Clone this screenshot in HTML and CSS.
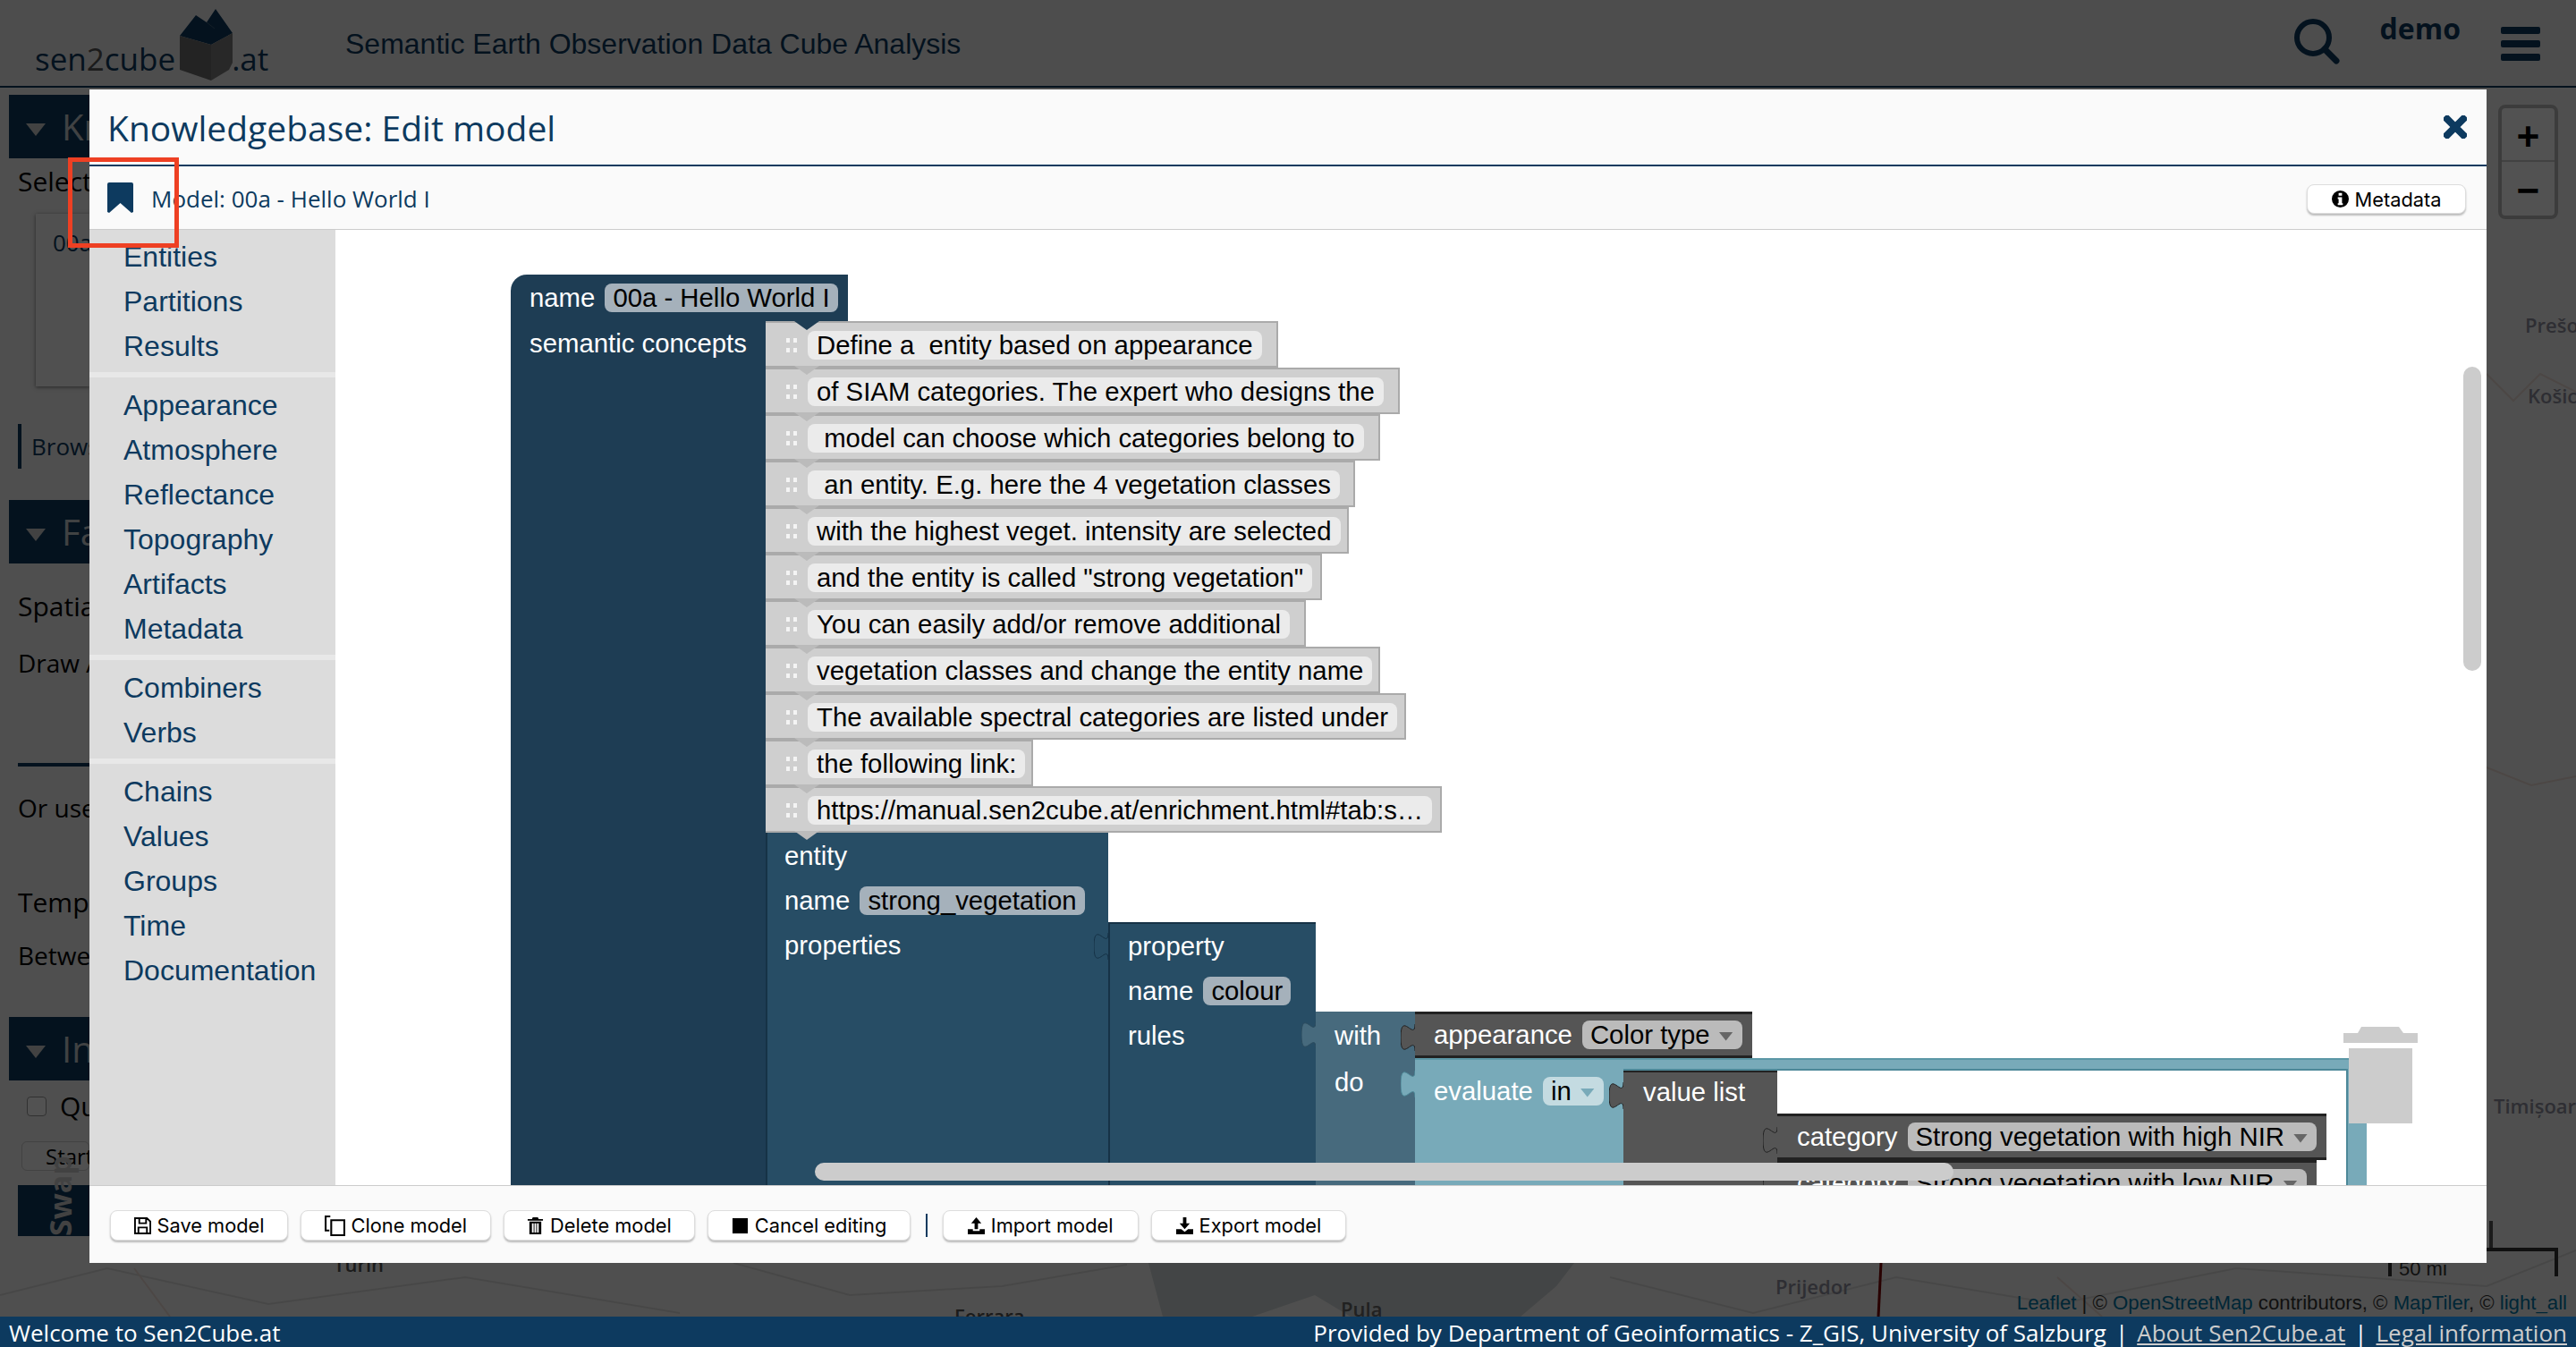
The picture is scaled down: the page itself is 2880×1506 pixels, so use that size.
FILE: index.html
```html
<!DOCTYPE html>
<html lang="en">
<head>
    <meta charset="UTF-8">
    <meta name="viewport" content="width=device-width, initial-scale=1.0">
    <title>Sen2Cube.at</title>
    <link rel="stylesheet" href="styles.css">
</head>
<body>
    <svg class="defs">
        <symbol id="nub" viewBox="0 0 8 15">
            <path d="M8 0c0 10-8-8-8 7.5s8-2.5 8 7.5"/>
        </symbol>
    </svg>

    <div class="page">
        <header class="topbar">
            <div class="logo">
                <span>sen<span class="logo-two">2</span>cube</span>
                <svg class="logo-cube" viewBox="204 10 60 80">
                    <path fill="#0d3a5f" d="M204 40 222 17 234 25 244 10 263 37 239 50z"/>
                    <path fill="none" stroke="#3d5d78" stroke-width="1" d="M234 25 243 32"/>
                    <path fill="#6e6e6e" d="M204 40 239 50V90L204 78z"/>
                    <path fill="#7d7d7d" d="M239 50 263 37V70L259 78 239 90z"/>
                </svg>
                <span>.at</span>
            </div>
            <div class="topbar-title">Semantic Earth Observation Data Cube Analysis</div>
            <div class="topbar-actions">
                <svg class="search-icon" viewBox="0 0 51 51">
                    <circle cx="21" cy="21" r="18" fill="none" stroke="currentColor" stroke-width="6"/>
                    <path d="M34 34 47 47" stroke="currentColor" stroke-width="7" stroke-linecap="round"/>
                </svg>
                <span class="user-name">demo</span>
                <div class="burger"><i></i><i></i><i></i></div>
            </div>
        </header>

        <main class="map">
            <svg class="map-lines" viewBox="0 0 2880 1374">
                <path fill="#cfd6d8" d="M1284 1314 1500 1314 1760 1314 1740 1340 1700 1374 1510 1374 1470 1350 1400 1374 1300 1374z"/>
                <path fill="none" stroke="#dedede" stroke-width="2" d="M0 1350 120 1320 300 1360 520 1330 760 1370M820 1314 950 1350 1120 1340 1260 1316M1800 1330 1960 1370 2120 1330 2300 1360 2500 1320 2780 1340 2880 1300"/>
                <path fill="none" stroke="#ecdcd6" stroke-width="2" d="M2780 320 2810 350 2840 320 2880 340M2780 760 2830 780 2880 770M150 1320 190 1374M2300 1330 2350 1374"/>
                <path fill="none" stroke="#7d0000" stroke-width="3" d="M2103 1314 2100 1374"/>
            </svg>
            <span class="place place-turin">Turin</span>
            <span class="place place-ferrara">Ferrara</span>
            <span class="place place-pula">Pula</span>
            <span class="place place-prijedor">Prijedor</span>
            <span class="place place-presov">Prešov</span>
            <span class="place place-kosice">Košice</span>
            <span class="place place-timisoara">Timișoara</span>

            <aside class="side">
                <section class="panel panel-kb">
                    <h2 class="panel-head"><i class="caret"></i>Knowledgebase</h2>
                    <div class="panel-text panel-select">Selected model</div>
                    <div class="model-card">00a - Hello</div>
                    <div class="browse">Browse</div>
                </section>
                <section class="panel panel-facets">
                    <h2 class="panel-head"><i class="caret"></i>Factbase</h2>
                    <div class="panel-text facet-spatial">Spatial</div>
                    <div class="panel-small facet-draw">Draw Area</div>
                    <div class="facet-rule"></div>
                    <div class="panel-small facet-use">Or use</div>
                    <div class="panel-text facet-temp">Temporal</div>
                    <div class="panel-small facet-between">Between</div>
                </section>
                <section class="panel panel-info">
                    <h2 class="panel-head"><i class="caret"></i>Inference</h2>
                    <div class="query"><i class="checkbox"></i>Query</div>
                    <div class="start-button">Start</div>
                </section>
                <div class="swap"><span>Swap</span></div>
            </aside>

            <div class="zoom-box">
                <div class="zoom-in">+</div>
                <div class="zoom-out">−</div>
            </div>
            <div class="scale"><div class="scale-top"></div><div class="scale-bottom">50 mi</div></div>
            <div class="attribution"><a>Leaflet</a> | © <a>OpenStreetMap</a> contributors, © <a>MapTiler</a>, © <a>light_all</a></div>
        </main>

        <div class="overlay"></div>

        <footer class="statusbar">
            <span>Welcome to Sen2Cube.at</span>
            <span>Provided by Department of Geoinformatics - Z_GIS, University of Salzburg<span class="sep">|</span><a>About Sen2Cube.at</a><span class="sep">|</span><a>Legal information</a></span>
        </footer>

        <div class="modal">
            <div class="modal-head">
                <h1>Knowledgebase: Edit model</h1>
                <svg class="close-icon" viewBox="0 0 26 26">
                    <path d="M4 4 22 22M22 4 4 22" stroke="currentColor" stroke-width="8" stroke-linecap="square"/>
                </svg>
            </div>
            <div class="modal-sub">
                <svg class="bookmark" viewBox="0 0 29 34">
                    <path fill="currentColor" d="M2 0H27A2 2 0 0 1 29 2V33L27 34 14.500 23 2 34 0 33V2A2 2 0 0 1 2 0z"/>
                </svg>
                <span class="model-title">Model: 00a - Hello World I</span>
                <button class="btn btn-meta">
                    <svg class="btn-icon" viewBox="0 0 20 20">
                        <path fill="currentColor" fill-rule="evenodd" d="M10 0a10 10 0 1 0 0 20a10 10 0 1 0 0-20zM8 3h4v3H8zM7 8h5v7h1v2H7v-2h1v-5H7z"/>
                    </svg>
                    Metadata
                </button>
            </div>

            <div class="modal-body">
                <nav class="toolbox">
                    <div class="toolbox-group">
                        <div class="toolbox-item">Entities</div>
                        <div class="toolbox-item">Partitions</div>
                        <div class="toolbox-item">Results</div>
                    </div>
                    <div class="toolbox-group">
                        <div class="toolbox-item">Appearance</div>
                        <div class="toolbox-item">Atmosphere</div>
                        <div class="toolbox-item">Reflectance</div>
                        <div class="toolbox-item">Topography</div>
                        <div class="toolbox-item">Artifacts</div>
                        <div class="toolbox-item">Metadata</div>
                    </div>
                    <div class="toolbox-group">
                        <div class="toolbox-item">Combiners</div>
                        <div class="toolbox-item">Verbs</div>
                    </div>
                    <div class="toolbox-group">
                        <div class="toolbox-item">Chains</div>
                        <div class="toolbox-item">Values</div>
                        <div class="toolbox-item">Groups</div>
                        <div class="toolbox-item">Time</div>
                        <div class="toolbox-item">Documentation</div>
                    </div>
                </nav>

                <div class="workspace">
                    <div class="model">
                        <div class="model-name">
                            <span>name</span><span class="field field-blue">00a - Hello World I</span>
                        </div>
                        <div class="model-body">
                            <div class="model-label">semantic concepts</div>
                            <div class="model-stack">
                                <div class="note" style="width: 573px"><i class="handle"></i><span class="field field-light">Define a  entity based on appearance</span></div>
                                <div class="note" style="width: 709px"><i class="handle"></i><span class="field field-light">of SIAM categories. The expert who designs the</span></div>
                                <div class="note" style="width: 687px"><i class="handle"></i><span class="field field-light"> model can choose which categories belong to</span></div>
                                <div class="note" style="width: 659px"><i class="handle"></i><span class="field field-light"> an entity. E.g. here the 4 vegetation classes</span></div>
                                <div class="note" style="width: 652px"><i class="handle"></i><span class="field field-light">with the highest veget. intensity are selected</span></div>
                                <div class="note" style="width: 622px"><i class="handle"></i><span class="field field-light">and the entity is called "strong vegetation"</span></div>
                                <div class="note" style="width: 604px"><i class="handle"></i><span class="field field-light">You can easily add/or remove additional</span></div>
                                <div class="note" style="width: 687px"><i class="handle"></i><span class="field field-light">vegetation classes and change the entity name</span></div>
                                <div class="note" style="width: 716px"><i class="handle"></i><span class="field field-light">The available spectral categories are listed under</span></div>
                                <div class="note" style="width: 299px"><i class="handle"></i><span class="field field-light">the following link:</span></div>
                                <div class="note" style="width: 756px"><i class="handle"></i><span class="field field-light">https://manual.sen2cube.at/enrichment.html#tab:s…</span></div>

                                <div class="entity">
                                    <div class="entity-col">
                                        <div class="line">entity</div>
                                        <div class="line">name<span class="field field-blue">strong_vegetation</span></div>
                                        <div class="line">properties</div>
                                    </div>
                                    <div class="property">
                                        <svg class="nub nub-property"><use href="#nub"/></svg>
                                        <div class="property-col">
                                            <div class="line">property</div>
                                            <div class="line">name<span class="field field-blue">colour</span></div>
                                            <div class="line">rules</div>
                                        </div>
                                        <div class="rule">
                                            <svg class="nub nub-rule"><use href="#nub"/></svg>
                                            <div class="rule-col">
                                                <div class="line">with</div>
                                                <div class="line">do</div>
                                            </div>
                                            <div class="rule-body">
                                                <div class="appearance">
                                                    <svg class="nub nub-grey"><use href="#nub"/></svg>
                                                    <span>appearance</span><span class="field field-grey">Color type<i class="arrow"></i></span>
                                                </div>
                                                <div class="evaluate">
                                                    <svg class="nub nub-teal"><use href="#nub"/></svg>
                                                    <div class="evaluate-col">
                                                        <span>evaluate</span><span class="field field-teal">in<i class="arrow arrow-teal"></i></span>
                                                    </div>
                                                    <div class="evaluate-slot">
                                                        <div class="value-list">
                                                            <svg class="nub nub-list"><use href="#nub"/></svg>
                                                            <div class="line">value list</div>
                                                        </div>
                                                        <div class="categories">
                                                            <div class="category">
                                                                <svg class="nub nub-cat"><use href="#nub"/></svg>
                                                                <span>category</span><span class="field field-grey">Strong vegetation with high NIR<i class="arrow"></i></span>
                                                            </div>
                                                            <div class="category">
                                                                <svg class="nub nub-cat"><use href="#nub"/></svg>
                                                                <span>category</span><span class="field field-grey">Strong vegetation with low NIR<i class="arrow"></i></span>
                                                            </div>
                                                        </div>
                                                    </div>
                                                </div>
                                            </div>
                                        </div>
                                    </div>
                                </div>
                            </div>
                        </div>
                    </div>

                    <svg class="trash" viewBox="0 0 83 108">
                        <path fill="#ccc" d="M16 7 20 0H62L67 7H83V18H0V7zM6 24H77V108H6z"/>
                    </svg>
                    <div class="scroll-x"></div>
                    <div class="scroll-y"></div>
                </div>
            </div>

            <div class="modal-foot">
                <button class="btn">
                    <svg class="btn-icon" viewBox="0 0 20 20"><path fill="none" stroke="currentColor" stroke-width="2" d="M2 1H15L19 5V19H1V1zM6 1V7H14V1M5 19V12H15V19"/></svg>
                    Save model
                </button>
                <button class="btn">
                    <svg class="btn-icon btn-icon-wide" viewBox="0 0 22 22"><path fill="none" stroke="currentColor" stroke-width="2" d="M6 1H1V16H5M7 5H21V21H7z"/></svg>
                    Clone model
                </button>
                <button class="btn">
                    <svg class="btn-icon" viewBox="0 0 20 20"><path fill="currentColor" fill-rule="evenodd" d="M7 0H13L14 2H19V4H1V2H6zM3 5H17V20H3zM6 7V18H8V7zM9 7V18H11V7zM12 7V18H14V7z"/></svg>
                    Delete model
                </button>
                <button class="btn">
                    <svg class="btn-icon" viewBox="0 0 20 20"><path fill="currentColor" d="M1 1H19V19H1z"/></svg>
                    Cancel editing
                </button>
                <i class="foot-sep"></i>
                <button class="btn btn-port">
                    <svg class="btn-icon" viewBox="0 0 20 20"><path fill="currentColor" d="M10 0 16 7H12V14H8V7H4zM0 14H6V16H14V14H20V20H0z"/></svg>
                    Import model
                </button>
                <button class="btn btn-port">
                    <svg class="btn-icon" viewBox="0 0 20 20"><path fill="currentColor" d="M8 0H12V7H16L10 14 4 7H8zM0 14H6L10 17 14 14H20V20H0z"/></svg>
                    Export model
                </button>
            </div>
        </div>

        <div class="callout"></div>
    </div>
</body>
</html>
```
FILE: styles.css
```css
:root {
    --navy: #0d3a5f;
    --model-color: #1e3d54;
    --entity-color: #274d65;
    --rule-color: #476a7d;
    --grey-block: #555;
    --teal-block: #78aab9;
    --teal-edge: #4d8898;
}

* {
    box-sizing: border-box;
}

body {
    margin: 0;
    font-family: "Liberation Sans", Arial, sans-serif;
}

.defs {
    display: none;
}

.page {
    position: relative;
    width: 2880px;
    height: 1506px;
    overflow: hidden;
    display: flex;
    flex-direction: column;
    background-color: #fff;
}

/* page behind the dialog */
.topbar {
    height: 98px;
    flex: none;
    display: flex;
    background-color: #f0f0f0;
    border-bottom: 2px solid var(--navy);
    color: var(--navy);
}

.logo {
    margin-left: 39px;
    width: 272px;
    height: 80px;
    margin-top: 10px;
    display: flex;
    align-items: flex-end;
    font-family: "Open Sans", sans-serif;
    font-size: 35px;
    line-height: 48px;
}

.logo-two {
    color: #555;
}

.logo-cube {
    width: 60px;
    height: 80px;
    margin: 0 -2px 0 5px;
    flex: none;
}

.topbar-title {
    margin-left: 75px;
    margin-top: 27px;
    font-size: 32px;
    line-height: 44px;
}

.topbar-actions {
    margin-left: auto;
    margin-right: 40px;
    display: flex;
    align-items: flex-start;
}

.search-icon {
    width: 51px;
    height: 51px;
    margin-top: 21px;
}

.user-name {
    margin-left: 45px;
    margin-top: 8px;
    font-family: "Open Sans", sans-serif;
    font-weight: 700;
    font-size: 32px;
    line-height: 48px;
}

.burger {
    margin-left: 45px;
    margin-top: 30px;
    display: flex;
    flex-direction: column;
    gap: 7px;
}

.burger i {
    display: block;
    width: 44px;
    height: 8px;
    border-radius: 2px;
    background-color: currentColor;
}

.map {
    position: relative;
    flex: 1;
    background-color: #f6f6f4;
    overflow: hidden;
}

.map-lines {
    position: absolute;
    left: 0;
    top: 0;
    width: 2880px;
    height: 1374px;
}

.place {
    position: absolute;
    font-family: "Open Sans", sans-serif;
    font-weight: 600;
    font-size: 22px;
    color: #8e8e9e;
    white-space: nowrap;
}

.place-turin { left: 373px; top: 1300px; color: #555; }
.place-ferrara { left: 1067px; top: 1358px; color: #555; }
.place-pula { left: 1499px; top: 1350px; color: #666; }
.place-prijedor { left: 1985px; top: 1325px; color: #8e8e9e; }
.place-presov { left: 2823px; top: 250px; }
.place-kosice { left: 2826px; top: 329px; }
.place-timisoara { left: 2788px; top: 1123px; }

.side {
    position: absolute;
    left: 10px;
    top: 8px;
    width: 90px;
    height: 1304px;
    overflow: hidden;
    display: flex;
    flex-direction: column;
    gap: 10px;
    font-family: "Open Sans", sans-serif;
    white-space: nowrap;
    color: #000;
}

.panel {
    flex: none;
    background-color: #f4f4f4;
    overflow: hidden;
}

.panel-kb { height: 443px; }
.panel-facets { height: 567px; }
.panel-info { height: 188px; margin-top: 1px; }

.panel-head {
    margin: 0;
    height: 71px;
    padding-left: 59px;
    position: relative;
    background-color: var(--navy);
    color: #c8ccd0;
    font-family: "Open Sans", sans-serif;
    font-weight: 400;
    font-size: 40px;
    line-height: 71px;
}

.caret {
    position: absolute;
    left: 19px;
    top: 32px;
    width: 22px;
    height: 14px;
    background-color: #ccc;
    clip-path: polygon(0 0, 100% 0, 50% 100%);
}

.panel-text {
    padding-left: 10px;
    font-size: 30px;
    line-height: 44px;
}

.panel-small {
    padding-left: 10px;
    font-size: 28px;
    line-height: 40px;
}

.panel-select { margin-top: 4px; }

.model-card {
    margin: 14px 0 0 30px;
    height: 193px;
    padding: 14px 0 0 19px;
    font-size: 26px;
    color: var(--navy);
    background-color: #f8f8f8;
    box-shadow: 0 1px 4px rgba(0, 0, 0, 0.5);
}

.browse {
    margin: 42px 0 0 10px;
    height: 50px;
    padding-left: 11px;
    border-left: 4px solid var(--navy);
    font-size: 26px;
    line-height: 50px;
    color: var(--navy);
}

.facet-spatial { margin-top: 26px; }
.facet-draw { margin-top: 21px; }

.facet-rule {
    margin: 92px 0 0 10px;
    height: 4px;
    background-color: var(--navy);
}

.facet-use { margin-top: 26px; }
.facet-temp { margin-top: 64px; }
.facet-between { margin-top: 17px; }

.query {
    margin: 18px 0 0 20px;
    display: flex;
    align-items: center;
    gap: 15px;
    font-size: 30px;
    line-height: 22px;
}

.checkbox {
    flex: none;
    width: 22px;
    height: 22px;
    background-color: #fff;
    border: 1px solid #999;
    border-radius: 4px;
}

.start-button {
    margin: 28px 0 0 14px;
    height: 33px;
    padding-left: 26px;
    background-color: #f8f8f8;
    border: 1px solid #ccc;
    border-radius: 6px;
    font-size: 24px;
    line-height: 31px;
}

.swap {
    flex: none;
    margin: -10px 0 0 10px;
    height: 57px;
    background-color: var(--navy);
    position: relative;
}

.swap span {
    position: absolute;
    left: 24px;
    top: 0;
    color: #ccc;
    font-weight: 700;
    font-size: 34px;
    transform-origin: left top;
    transform: rotate(-90deg) translateX(-57px);
}

.zoom-box {
    position: absolute;
    left: 2793px;
    top: 19px;
    width: 67px;
    height: 128px;
    border: 4px solid #bbb;
    border-radius: 8px;
    background-color: #fff;
    font-family: "Liberation Mono", monospace;
    font-weight: 700;
    font-size: 44px;
    color: #000;
    text-align: center;
}

.zoom-in {
    height: 60px;
    line-height: 70px;
    border-bottom: 2px solid #ccc;
}

.zoom-out {
    height: 60px;
    line-height: 70px;
}

.scale {
    position: absolute;
    left: 2670px;
    top: 1267px;
    width: 190px;
    color: #333;
    font-size: 22px;
}

.scale-top {
    width: 117px;
    height: 32px;
    border-right: 4px solid #555;
    margin-bottom: -2px;
}

.scale-bottom {
    height: 32px;
    padding-left: 8px;
    border: 4px solid #333;
    border-bottom: 0;
    line-height: 40px;
}

.attribution {
    position: absolute;
    right: 10px;
    bottom: 2px;
    font-size: 22.200px;
    line-height: 26px;
    color: #333;
    white-space: nowrap;
}

.attribution a {
    color: #0078a8;
}

.overlay {
    position: absolute;
    left: 0;
    top: 0;
    right: 0;
    bottom: 34px;
    background-color: rgba(0, 0, 0, 0.68);
}

.statusbar {
    position: relative;
    height: 34px;
    flex: none;
    padding: 0 10px;
    display: flex;
    justify-content: space-between;
    background-color: var(--navy);
    color: #fff;
    font-family: "Open Sans", sans-serif;
    font-size: 26px;
    line-height: 36px;
    white-space: nowrap;
}

.statusbar a {
    color: #ccc;
    text-decoration: underline;
}

.sep {
    margin: 0 10px;
}

/* dialog */
.modal {
    position: absolute;
    left: 100px;
    top: 100px;
    width: 2680px;
    height: 1312px;
    display: flex;
    flex-direction: column;
    background-color: #fafafa;
    color: var(--navy);
}

.modal-head {
    height: 86px;
    flex: none;
    padding: 0 22px 0 20px;
    display: flex;
    justify-content: space-between;
    align-items: center;
    border-bottom: 2px solid var(--navy);
}

.modal-head h1 {
    margin: 0;
    font-family: "Open Sans", sans-serif;
    font-weight: 400;
    font-size: 39px;
}

.close-icon {
    width: 26px;
    height: 26px;
}

.modal-sub {
    height: 71px;
    flex: none;
    padding: 0 23px 0 20px;
    display: flex;
    align-items: center;
    border-bottom: 1px solid #ccc;
}

.bookmark {
    width: 29px;
    height: 34px;
    flex: none;
}

.model-title {
    margin-left: 20px;
    margin-top: 1px;
    font-family: "Open Sans", sans-serif;
    font-size: 26px;
}

.btn {
    height: 34px;
    padding: 0 25.500px;
    display: flex;
    align-items: center;
    gap: 7px;
    background-color: #fff;
    border: 1px solid #ddd;
    border-radius: 8px;
    box-shadow: 0 2px 2px rgba(0, 0, 0, 0.25);
    font-family: Inter, sans-serif;
    font-size: 21.800px;
    color: #000;
    white-space: nowrap;
}

.btn-meta {
    margin-left: auto;
    margin-top: 3px;
    height: 33px;
    width: 178px;
    justify-content: center;
}

.btn-port {
    padding: 0 27px;
}

.btn-icon {
    width: 19px;
    height: 19px;
    flex: none;
}

.btn-icon-wide {
    width: 23px;
    height: 23px;
}

.modal-body {
    flex: 1;
    min-height: 0;
    display: flex;
}

.toolbox {
    width: 275px;
    flex: none;
    padding-top: 5px;
    background-color: #dcdcdc;
    font-size: 32px;
}

.toolbox-group {
    padding: 6px 0 4px 38px;
}

.toolbox-group:first-child {
    padding-top: 0;
}

.toolbox-group + .toolbox-group {
    border-top: 6px solid #e8e8e8;
}

.toolbox-item {
    line-height: 50px;
}

.workspace {
    position: relative;
    flex: 1;
    overflow: hidden;
    background-color: #fff;
}

.model {
    position: absolute;
    left: 196px;
    top: 50px;
    width: 2200px;
    height: 1300px;
    display: flex;
    flex-direction: column;
    font-size: 29.330px;
    color: #fff;
    white-space: nowrap;
}

.model-name {
    width: 377px;
    height: 52px;
    flex: none;
    padding-left: 21px;
    display: flex;
    align-items: center;
    gap: 11px;
    background-color: var(--model-color);
    border-top-left-radius: 18px;
}

.model-body {
    flex: 1;
    display: flex;
}

.model-label {
    width: 285px;
    flex: none;
    padding-left: 21px;
    line-height: 50px;
    background-color: var(--model-color);
}

.model-stack {
    flex: 1;
    display: flex;
    flex-direction: column;
}

.field {
    height: 32px;
    padding: 0 9px;
    display: inline-flex;
    align-items: center;
    border-radius: 8px;
    color: #000;
}

.field-blue { background-color: #a5b1bb; }
.field-grey { background-color: #bbb; padding-right: 10px; }
.field-teal { background-color: #c4dbe1; padding-right: 10px; }

.field-light {
    padding: 0 10px;
    background-color: #ebebeb;
    white-space: pre;
}

.arrow {
    width: 16px;
    height: 10px;
    margin-left: 10px;
    margin-top: 3px;
    background-color: #666;
    clip-path: polygon(0 0, 100% 0, 50% 100%);
}

.arrow-teal {
    background-color: var(--teal-block);
}

.note {
    position: relative;
    height: 52px;
    flex: none;
    padding: 8px 10px 0 47px;
    background-color: #cfcfcf;
    border: solid #aaa;
    border-width: 2px 2px 2px 0;
}

.note:first-child::before {
    content: "";
    position: absolute;
    left: 32px;
    top: -2px;
    width: 28px;
    height: 10px;
    background-color: var(--model-color);
    clip-path: polygon(0 0, 100% 0, 50% 100%);
}

.note::after {
    content: "";
    position: absolute;
    z-index: 2;
    left: 32px;
    bottom: -10px;
    width: 28px;
    height: 10px;
    background-color: #bbb;
    clip-path: polygon(0 0, 100% 0, 50% 100%);
}

.handle {
    position: absolute;
    left: 23px;
    top: 17px;
    width: 12px;
    height: 16px;
    background:
        linear-gradient(#f4f4f4, #f4f4f4) left top / 4px 5px no-repeat,
        linear-gradient(#f4f4f4, #f4f4f4) right top / 4px 5px no-repeat,
        linear-gradient(#f4f4f4, #f4f4f4) left bottom / 4px 5px no-repeat,
        linear-gradient(#f4f4f4, #f4f4f4) right bottom / 4px 5px no-repeat;
}

.entity {
    flex: 1;
    display: flex;
}

.entity-col {
    width: 383px;
    flex: none;
    padding: 1px 0 0 19px;
    background-color: var(--entity-color);
    border-left: 2px solid #163246;
}

.line {
    height: 50px;
    display: flex;
    align-items: center;
    gap: 11px;
}

.property {
    position: relative;
    margin-top: 100px;
    flex: 1;
    display: flex;
    align-items: stretch;
}

.nub {
    position: absolute;
    left: -16px;
    width: 16px;
    height: 30px;
    overflow: visible;
    stroke-width: 0.5;
}

.nub-property { top: 12px; fill: var(--entity-color); stroke: #163246; }
.nub-rule { top: 11px; fill: var(--rule-color); stroke: #2d4c5e; }
.nub-grey { top: 11px; fill: var(--grey-block); stroke: #222; }
.nub-teal { top: 12px; fill: var(--teal-block); stroke: var(--teal-edge); }
.nub-list { top: 11px; fill: var(--grey-block); stroke: #222; }
.nub-cat { top: 12px; fill: var(--grey-block); stroke: #222; }

.property-col {
    width: 232px;
    flex: none;
    padding-left: 20px;
    background-color: var(--entity-color);
    border-top: 2px solid #163246;
    border-left: 2px solid #163246;
}

.rule {
    position: relative;
    margin-top: 100px;
    flex: 1;
    display: flex;
}

.rule-col {
    width: 111px;
    flex: none;
    padding: 1px 0 0 21px;
    background-color: var(--rule-color);
}

.rule-col .line {
    height: 52px;
}

.rule-body {
    flex: 1;
    display: flex;
    flex-direction: column;
}

.appearance {
    position: relative;
    width: fit-content;
    height: 52px;
    flex: none;
    padding: 0 11px 0 21px;
    display: flex;
    align-items: center;
    gap: 11px;
    background-color: var(--grey-block);
    border-top: 3px solid #222;
    border-bottom: 3px solid #222;
}

.evaluate {
    position: relative;
    width: 1064px;
    flex: 1;
    padding: 10px 21px 0 0;
    display: flex;
    background-color: var(--teal-block);
    border-top: 2px solid #5b97a6;
}

.evaluate-col {
    width: 233px;
    flex: none;
    height: 50px;
    padding-left: 21px;
    display: flex;
    align-items: center;
    gap: 11px;
}

.evaluate-slot {
    flex: 1;
    display: flex;
    background-color: #fff;
    border-top: 2px solid var(--teal-edge);
    border-right: 2px solid var(--teal-edge);
}

.value-list {
    position: relative;
    width: 172px;
    flex: none;
    padding-left: 22px;
    background-color: var(--grey-block);
    border-top: 2px solid #222;
}

.value-list .line {
    margin-top: -3px;
}

.categories {
    margin-top: 48px;
    display: flex;
    flex-direction: column;
}

.category {
    position: relative;
    width: fit-content;
    height: 52px;
    padding: 0 11px 0 22px;
    display: flex;
    align-items: center;
    gap: 11px;
    background-color: var(--grey-block);
    border-top: 3px solid #222;
    border-bottom: 3px solid #222;
}

.trash {
    position: absolute;
    left: 2245px;
    top: 891px;
    width: 83px;
    height: 108px;
}

.scroll-x {
    position: absolute;
    left: 536px;
    top: 1043px;
    width: 1273px;
    height: 20px;
    border-radius: 10px;
    background-color: #ccc;
}

.scroll-y {
    position: absolute;
    left: 2379px;
    top: 153px;
    width: 20px;
    height: 340px;
    border-radius: 10px;
    background-color: #ccc;
}

.modal-foot {
    height: 87px;
    flex: none;
    padding: 2px 23px 0;
    display: flex;
    align-items: center;
    gap: 14px;
    border-top: 1px solid #ccc;
}

.foot-sep {
    width: 2px;
    height: 26px;
    margin: 0 3px;
    background-color: var(--navy);
}

/* annotation drawn over the screenshot */
.callout {
    position: absolute;
    left: 76px;
    top: 176px;
    width: 124px;
    height: 101px;
    border: 5px solid #ee4023;
}
```
